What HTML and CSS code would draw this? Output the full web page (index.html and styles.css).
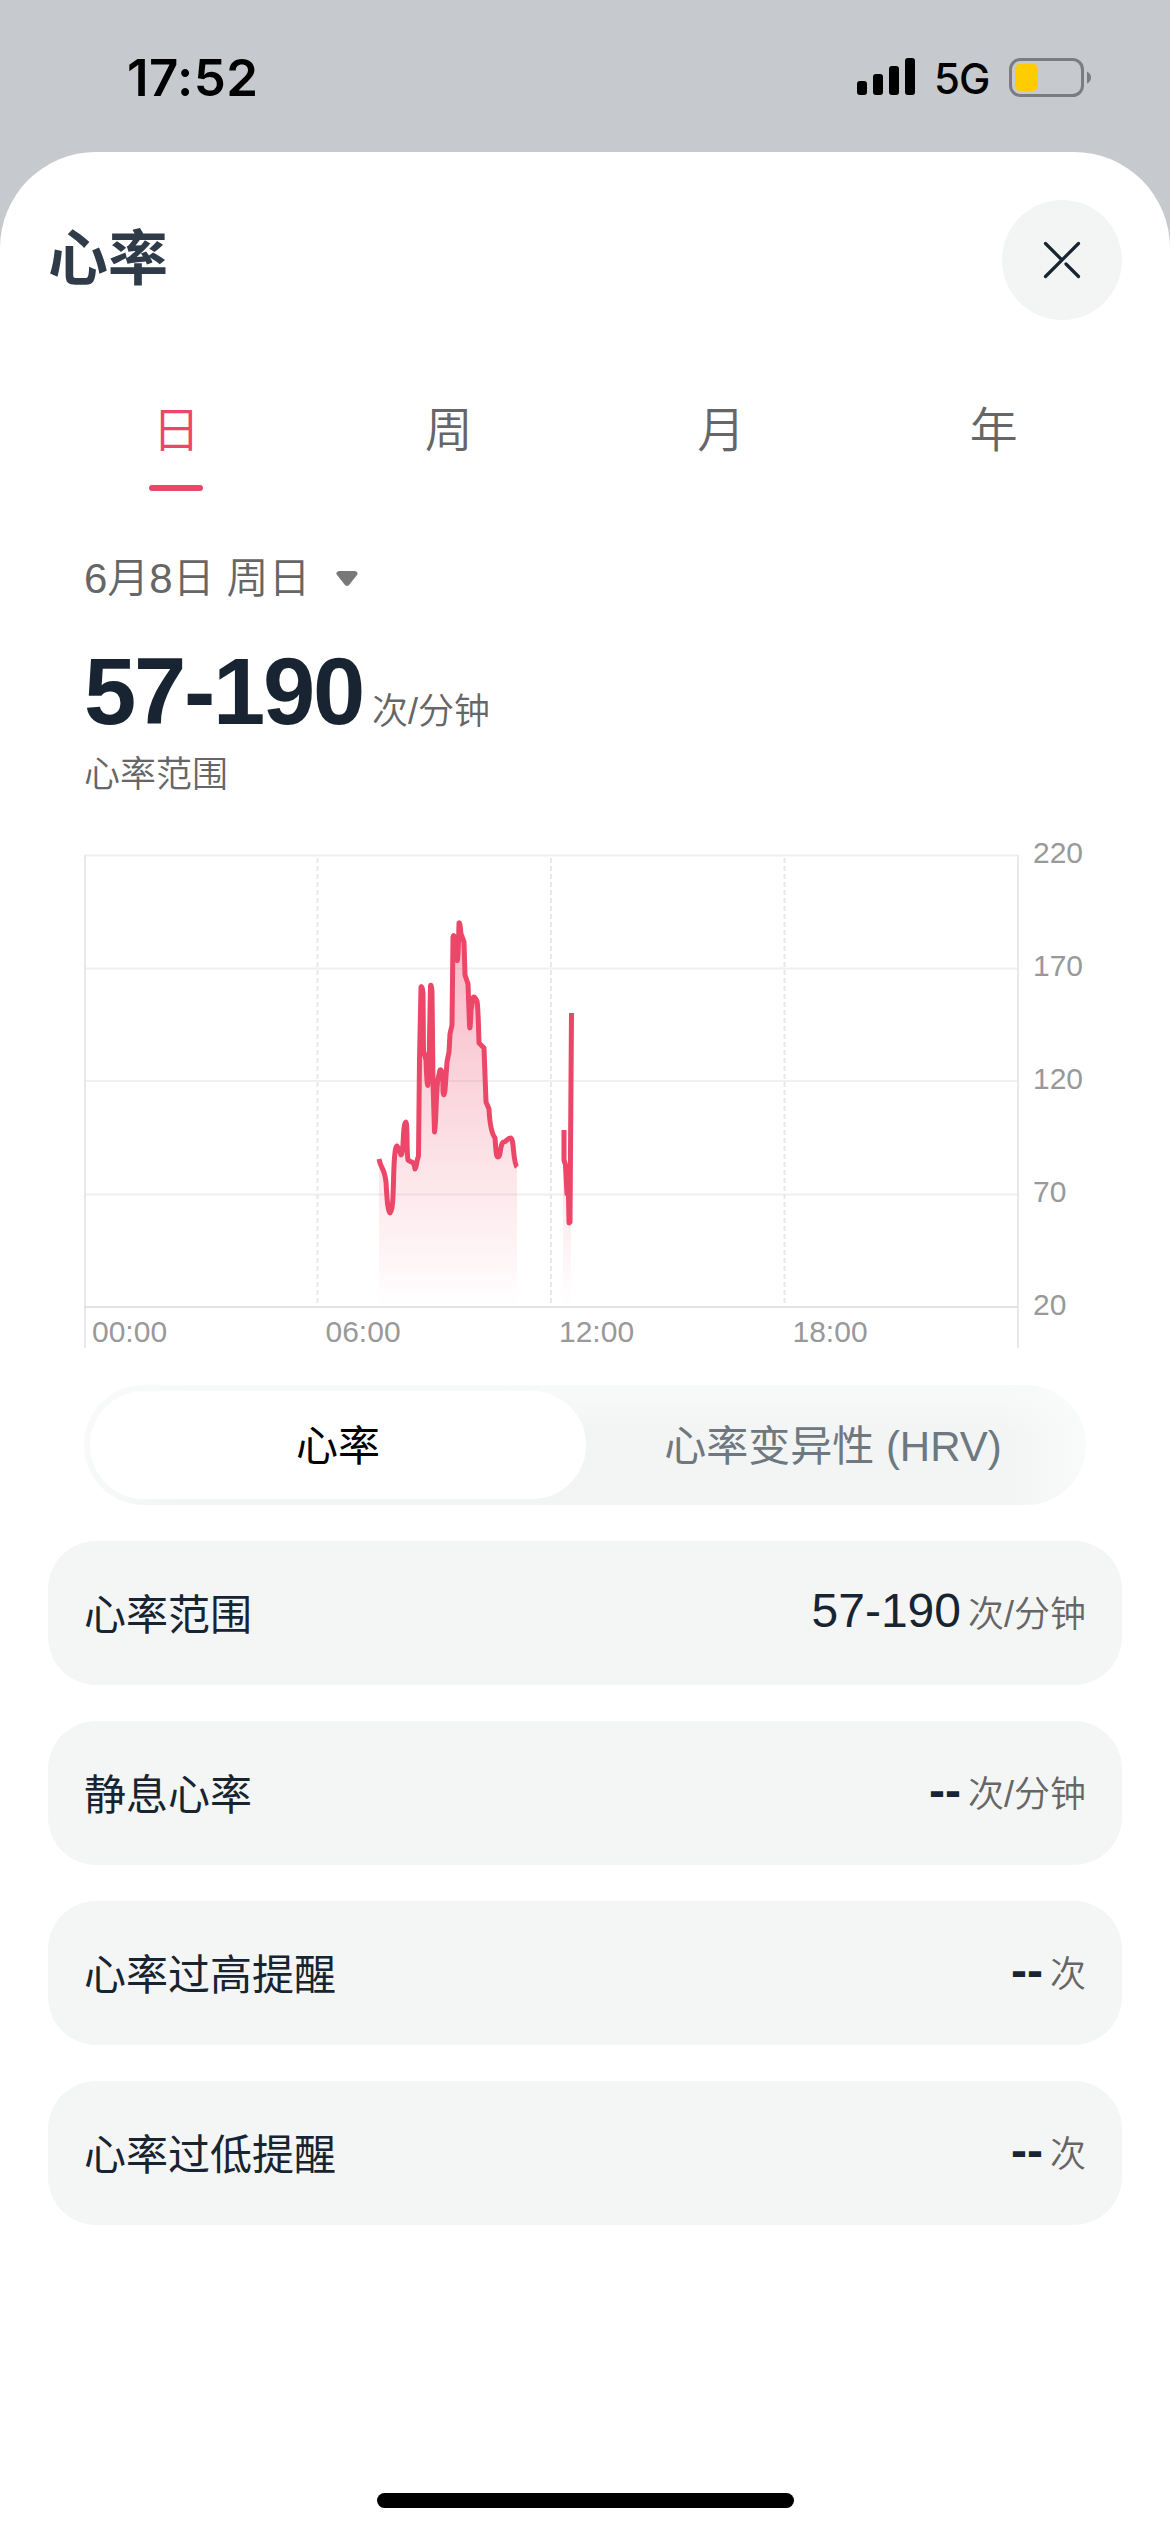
FILE: index.html
```html
<!DOCTYPE html>
<html lang="zh-CN">
<head>
<meta charset="utf-8">
<title>心率</title>
<link rel="stylesheet" href="styles.css">
</head>
<body>
<header class="status">
  <span class="clock">17:52</span>
  <div class="status-icons">
    <svg class="signal" width="58" height="38" viewBox="0 0 58 38"><rect y="23" width="10" height="14" rx="3"/><rect x="16" y="16" width="10" height="21" rx="3"/><rect x="32" y="8" width="10" height="29" rx="3"/><rect x="48" width="10" height="37" rx="3"/></svg>
    <span class="network">5G</span>
    <svg class="battery" width="82" height="39" viewBox="0 0 82 39"><rect x="1.5" y="1.5" width="72" height="36" rx="10" fill="none" stroke="#7b7c80" stroke-width="3"/><rect x="6" y="6" width="23" height="27" rx="5" fill="#ffcc02"/><path d="M78 13.500Q82 15.500 82 19.500T78 25.500Z" fill="#7b7c80"/></svg>
  </div>
</header>
<main class="sheet">
  <div class="titlebar">
    <h1>心率</h1>
    <button class="close" aria-label="关闭"><svg width="38" height="38" viewBox="0 0 38 38"><path d="M2.500 2.500L19 19M23 23L35.500 35.500M35.500 2.500L2.500 35.500" stroke="#182431" stroke-width="3.200" stroke-linecap="round"/></svg></button>
  </div>
  <nav class="tabs"><span class="tab active">日</span><span class="tab">周</span><span class="tab">月</span><span class="tab">年</span></nav>
  <section class="summary">
    <div class="date">6月8日 周日 <svg width="22" height="16" viewBox="0 0 22 16"><path d="M3 0H19Q23 1 21 4L13 14Q11 16 9 14L1 4Q-1 1 3 0Z" fill="#787878"/></svg></div>
    <div class="range"><strong>57-190</strong><span>次/分钟</span></div>
    <div class="caption">心率范围</div>
  </section>
  <section class="chart">
    <div class="plot">
      <svg width="936" height="496" viewBox="84 854 936 496">
        <defs><linearGradient id="fade" gradientUnits="userSpaceOnUse" x1="0" y1="922" x2="0" y2="1307"><stop offset="0" stop-color="#ec4668" stop-opacity=".4"/><stop offset="1" stop-color="#ec4668" stop-opacity="0"/></linearGradient></defs>
        <g fill="none" stroke="#f0f0f0" stroke-width="2"><path d="M84 855.500H1018M84 968.500H1018M84 1081H1018M84 1194.500H1018"/></g>
        <g fill="none" stroke="#e8e8e8" stroke-width="2"><path d="M85 855V1348M1018 855V1348"/><path d="M317.500 858V1307M551 858V1307M784.500 858V1307" stroke-dasharray="5 3"/><path d="M84 1307H1018" stroke="#e2e2e2"/></g>
        <path fill="url(#fade)" d="M379 1163L384 1171L390 1214L397 1140L402 1155L406 1122L408 1160L415 1169L419 1150L421 987L424 1055L428 1087L431 985L434 1134L437 1079L441 1070L444 1095L447 1060L451 1030L453 935L457 962L459 922L464 942L467 979L470 1030L473 996L477 1000L480 1045L484 1048L486 1103L493 1137L497 1158L503 1142L511 1138L517 1167V1307H379Z"/>
        <path fill="url(#fade)" d="M563 1133V1160L567 1194L569 1224L571 1014V1307H563Z"/>
        <g fill="none" stroke="#ec4668" stroke-width="5" stroke-linejoin="round">
          <path d="M379 1159C381 1170 384 1166 386 1182C387 1200 388 1213 390 1213C394 1213 393 1175 394.500 1158C396 1139 398 1146 401 1155C404 1155 402.500 1122 406 1122C407.500 1122 406.500 1152 408 1160C411 1163 414 1160 415 1169C417 1167 416 1162 418.500 1156L419.500 1060L421 987Q422 985 423 993L423.500 1051L426 1060Q427 1088 428 1085Q429 1084 429.500 1040L430.500 986Q431 983 432 991L433 1082L434.500 1132C436 1130 436 1088 438 1079L440 1070Q443 1068 443 1091Q444 1099 445 1090L447 1062L449 1052L450 1034L452 1025L453 937Q454 933 455 941L457 960Q458 965 459 923Q460 922 461 934L464 942L465 975L468 984L469.500 1025Q470 1035 471 1010L473 998Q474 995 477 1001Q478 1005 479 1043L484 1048L486 1102L489 1109Q490 1131 495 1138C496 1150 496 1157 498 1157C501 1157 500 1142 504 1142C507 1141 508 1138 511 1138C514 1139 513 1163 517 1167"/>
          <path d="M564 1130V1160L565.500 1165L567 1194L568.500 1195L569 1223L570 1222L571.500 1013"/>
        </g>
      </svg>
      <div class="hours"><span>00:00</span><span>06:00</span><span>12:00</span><span>18:00</span></div>
    </div>
    <div class="scale"><span>220</span><span>170</span><span>120</span><span>70</span><span>20</span></div>
  </section>
  <div class="segmented"><span class="segment selected">心率</span><span class="segment">心率变异性 (HRV)</span></div>
  <ul class="cards">
    <li><span class="label">心率范围</span><span class="value"><b class="num">57-190</b><small>次/分钟</small></span></li>
    <li><span class="label">静息心率</span><span class="value"><b>--</b><small>次/分钟</small></span></li>
    <li><span class="label">心率过高提醒</span><span class="value"><b>--</b><small>次</small></span></li>
    <li><span class="label">心率过低提醒</span><span class="value"><b>--</b><small>次</small></span></li>
  </ul>
  <div class="home"></div>
</main>
</body>
</html>
```

FILE: styles.css
```css
* { box-sizing: border-box; }
body {
  margin: 0;
  height: 2532px;
  display: flex;
  flex-direction: column;
  overflow: hidden;
  background: #c6c9ce;
  color: #182431;
  font-family: "Liberation Sans", "Noto Sans CJK SC", sans-serif;
}
.status {
  height: 152px;
  padding: 0 79px 0 127px;
  display: flex;
  justify-content: space-between;
  align-items: center;
  color: #000;
  font-family: Inter, sans-serif;
}
.clock { font-size: 51px; font-weight: 600; letter-spacing: 0.4px; padding-top: 3px; }
.status-icons { display: flex; align-items: center; padding-top: 3px; }
.signal { margin-top: -1px; }
.network { width: 54px; margin: 1px 21px 0 19px; font-size: 42px; font-weight: 500; letter-spacing: -1px; }
.sheet {
  flex: 1;
  display: flex;
  flex-direction: column;
  background: #fff;
  border-radius: 96px 96px 0 0;
}
.titlebar {
  height: 168px;
  padding: 48px 48px 0;
  display: flex;
  justify-content: space-between;
}
h1 { margin: 16px 0 0; font-size: 60px; line-height: 88px; font-weight: 700; color: #2f3b49; }
.close {
  width: 120px;
  height: 120px;
  padding: 0;
  border: 0;
  border-radius: 50%;
  display: grid;
  place-items: center;
  background: #f3f5f4;
}
.tabs { margin: 73px 40px 0; height: 98px; display: grid; grid-template-columns: repeat(4, 1fr); color: #666; font-weight: 350; }
.tab { display: flex; flex-direction: column; align-items: center; justify-content: space-between; font-size: 48px; line-height: 76px; }
.active { color: #ec4668; }
.active::after { content: ""; width: 54px; height: 6px; border-radius: 3px; background: currentColor; }
.summary { padding: 57px 84px 0; height: 363px; color: #666; font-weight: 350; }
.date { display: flex; align-items: center; gap: 26px; height: 62px; font-size: 42px; line-height: 62px; }
.range { display: flex; align-items: baseline; height: 120px; line-height: 120px; margin-top: 22px; }
.range strong { color: #182431; font-size: 94px; font-weight: 700; letter-spacing: -2.3px; }
.range span { margin-left: 9px; font-size: 36px; }
.caption { margin-top: -4px; font-size: 36px; line-height: 54px; }
.chart { display: flex; padding-left: 84px; height: 496px; color: #999; font-size: 30px; }
.plot { width: 936px; display: grid; }
.plot > * { grid-area: 1 / 1; }
.hours { align-self: end; height: 36px; display: grid; grid-template-columns: repeat(4, 233.5px); line-height: 36px; padding-left: 8px; }
.scale { margin: -18px 0 0 13px; height: 486px; display: flex; flex-direction: column; justify-content: space-between; line-height: 34px; }
.segmented {
  margin: 35px 84px 0;
  height: 120px;
  padding: 6px;
  border-radius: 60px;
  display: grid;
  grid-template-columns: 496px 1fr;
  background:
    linear-gradient(rgba(249, 251, 250, 0.9), rgba(249, 251, 250, 0) 40%),
    linear-gradient(90deg, #f8faf9, rgba(249, 250, 250, 0) 10%, rgba(249, 250, 250, 0) 92%, #f9fafa),
    #f3f4f4;
  color: #6e7880;
  font-size: 42px;
  line-height: 112px;
  text-align: center;
}
.segment { height: 108px; border-radius: 54px; }
.selected { background: #fff; color: #000; }
.cards { list-style: none; margin: 36px 48px 0; padding: 0; display: flex; flex-direction: column; gap: 36px; }
.cards li {
  height: 144px;
  padding: 0 36px 4px;
  border-radius: 48px;
  display: flex;
  justify-content: space-between;
  align-items: center;
  background: #f4f6f5;
  font-size: 42px;
}
.value { display: flex; align-items: baseline; gap: 7px; padding-bottom: 2px; }
.value b { font-size: 48px; }
.value .num { font-weight: 400; }
.value small { font-size: 36px; font-weight: 350; color: #666; }
.home { width: 417px; height: 15px; margin: auto auto 24px; border-radius: 8px; background: #000; }
```
